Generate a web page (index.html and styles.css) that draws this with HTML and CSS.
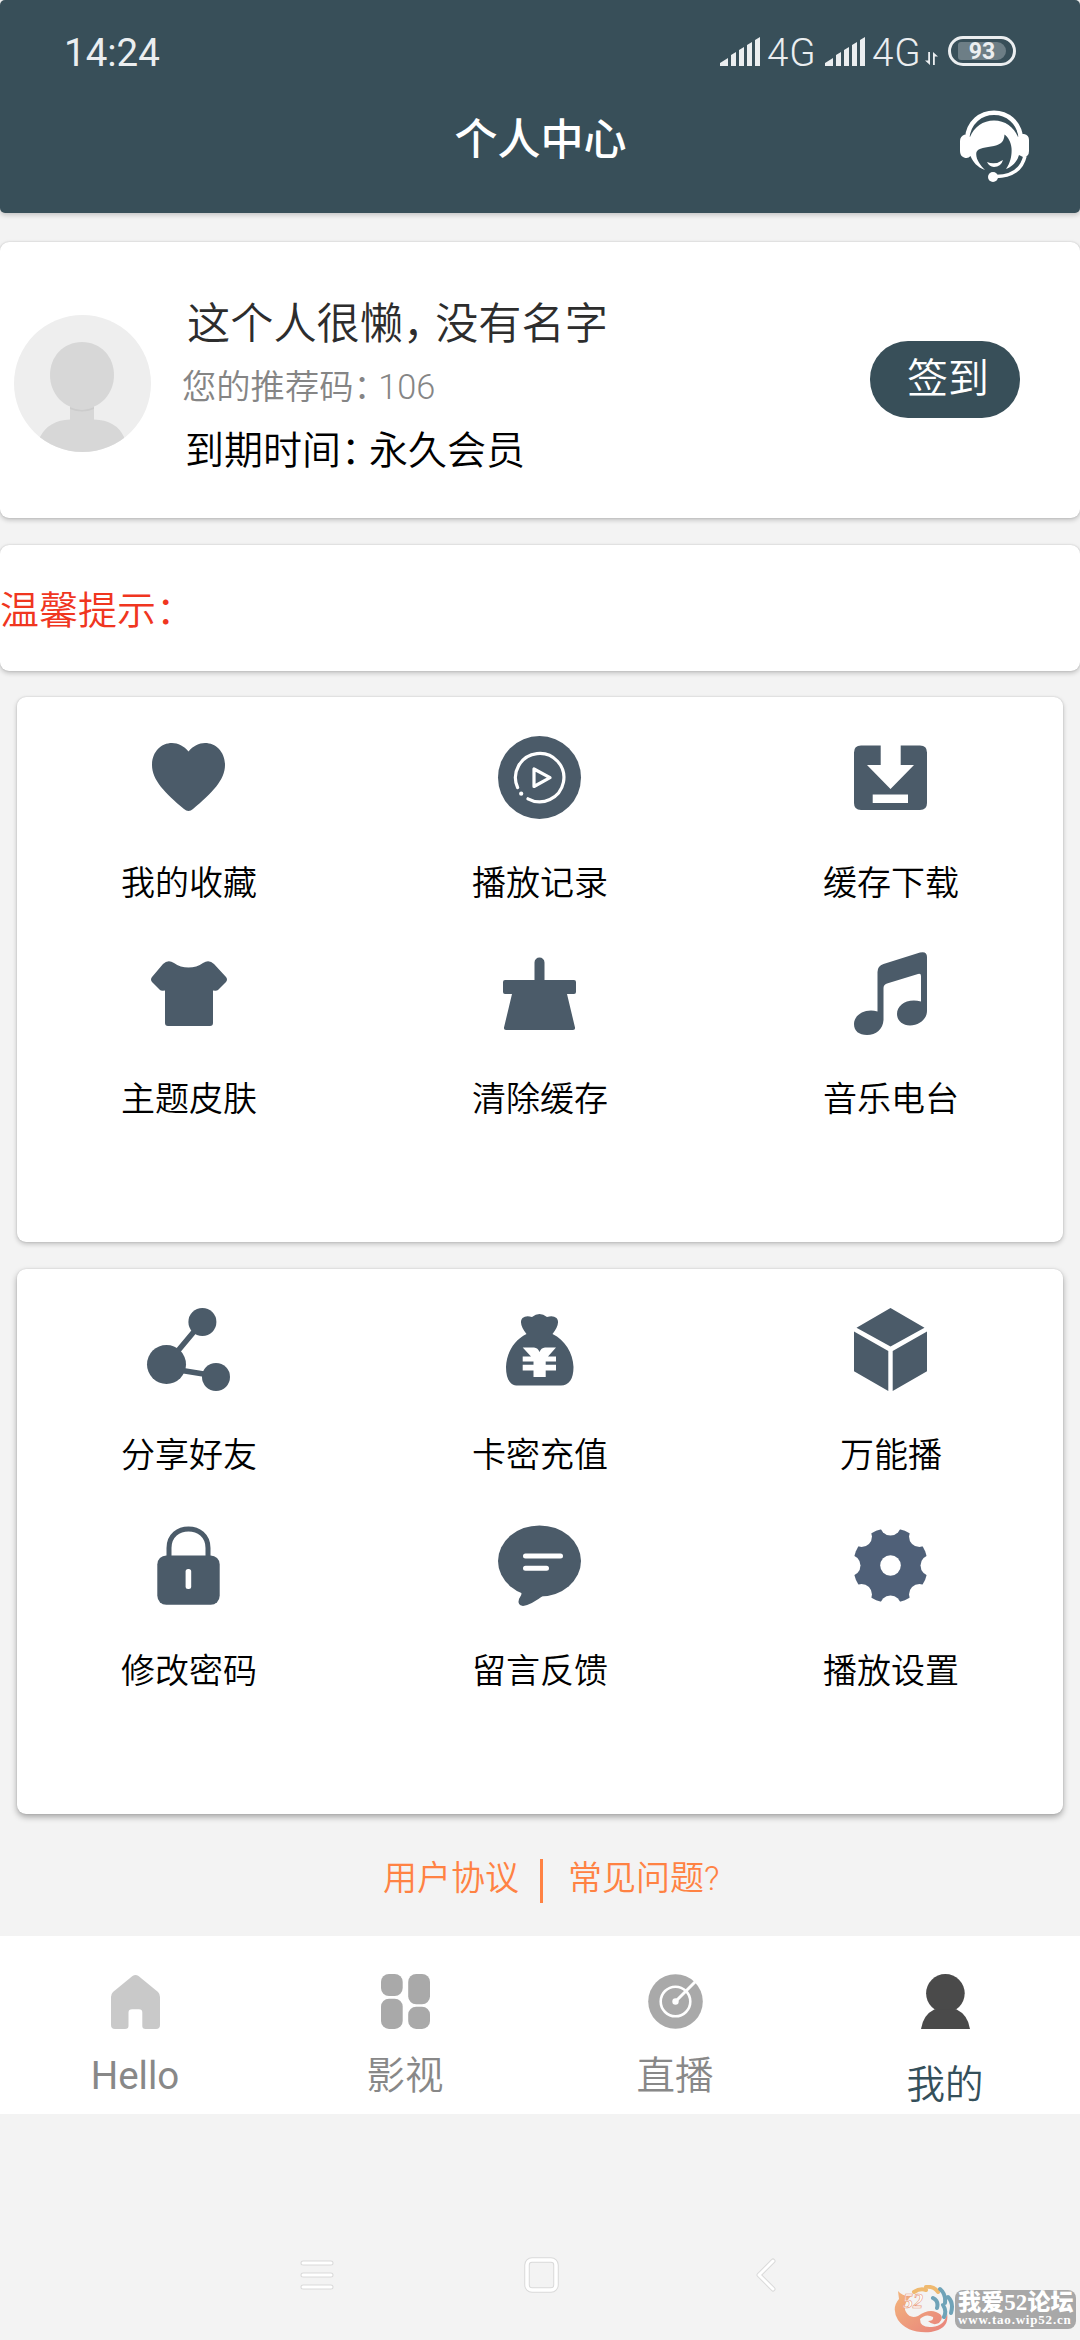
FILE: index.html
```html
<!DOCTYPE html>
<html lang="zh-CN">
<head>
<meta charset="utf-8">
<title>个人中心</title>
<link rel="stylesheet" href="styles.css">
</head>
<body>
<header class="header">
  <div class="status">
    <span class="clock">14:24</span>
    <div class="status-icons">
      <svg class="signal" viewBox="0 0 40 29"><path d="M0 29V26L8 21V29ZM11 29V18L16 15V29ZM19 29V13L24 10V29ZM27 29V8L32 5V29ZM35 29V3L40 0V29Z"/></svg>
      <span class="network">4G</span>
      <svg class="signal" viewBox="0 0 40 29"><path d="M0 29V26L8 21V29ZM11 29V18L16 15V29ZM19 29V13L24 10V29ZM27 29V8L32 5V29ZM35 29V3L40 0V29Z"/></svg>
      <span class="network">4G</span>
      <svg class="traffic" viewBox="0 0 13 13"><path d="M3.200 0H5V13L0 8.500H3.200ZM8 0L13 4.500H9.800V13H8Z"/></svg>
      <span class="battery"><span class="battery-fill">93</span></span>
    </div>
  </div>
  <div class="titlebar">
    <h1 class="title">个人中心</h1>
    <svg class="service" viewBox="0 0 70 73">
      <path d="M7 29C10 -6 58 -6 61 29" fill="none" stroke="#fff" stroke-width="4.600"/>
      <path d="M10 27C14 17 23 10.500 34 10.500C45 10.500 54 17 58 27L62 24H64Q69 25 69 30V41Q69 47 63 47L59 45C57 52 52 57 46 59C51 52 52 44 51.500 38C51 32 48 27 44.500 24.500C44 31 42 34 34 36C26 37.500 18 38 16.500 42C15 48 20 55 25 60C17 57 13 52 10.500 46Q8 49 4 47.500Q0 46 0 41V31Q0 26 5 24.500Z"/>
      <path d="M27 52Q35 55.500 43 50Q41 57 34 57Q29 56.500 27 52Z"/>
      <path d="M65 46C62 59 52 66.500 36 66.500" fill="none" stroke="#fff" stroke-width="3.500"/>
      <circle cx="33" cy="67" r="5"/>
    </svg>
  </div>
</header>

<section class="card profile">
  <svg class="avatar" viewBox="0 0 137 137">
    <defs><clipPath id="round"><circle cx="68.500" cy="68.500" r="68.500"/></clipPath></defs>
    <g clip-path="url(#round)">
      <rect width="137" height="137" fill="#eee"/>
      <path fill="#d7d7d7" d="M56 90H80V104.500Q102 105 110 122V137H26V122Q35 105 56 104.500Z"/>
      <path fill="#ccc" d="M56 92Q68 98 80 92V94Q68 99 56 94Z"/>
      <path fill="#d7d7d7" d="M68 27C87 27 100 42 100 60C100 79 86 94 68 94C50 94 36 79 36 60C36 42 49 27 68 27Z"/>
    </g>
  </svg>
  <div class="info">
    <p class="name">这个人很懒<span class="comma">，</span>没有名字</p>
    <p class="code">您的推荐码<span class="colon">：</span>106</p>
    <p class="expiry">到期时间<span class="colon">：</span>永久会员</p>
  </div>
  <button class="checkin">签到</button>
</section>

<section class="card notice">温馨提示<span class="colon">：</span></section>

<section class="card menu">
  <div class="item">
    <svg class="icon" viewBox="0 0 84 84"><path d="M41.500 15.500C37 10 31 7 25 7C14 7 5 16 5 29C5 44 18 57 37 73Q41.500 77 46 73C65 57 78 44 78 29C78 16 69 7 58 7C52 7 46 10 41.500 15.500Z"/></svg>
    <span class="label">我的收藏</span>
  </div>
  <div class="item">
    <svg class="icon" viewBox="0 0 84 84"><circle cx="41.500" cy="41.500" r="41.500"/><g fill="none" stroke="#fff" stroke-width="3.200" stroke-linecap="round" stroke-linejoin="round"><path d="M19.600 51.500A24.200 24.200 0 1 1 30 62.800M36 33V50.500L52 41.700Z"/></g><circle cx="23.200" cy="57.700" r="2.100" fill="#fff"/></svg>
    <span class="label">播放记录</span>
  </div>
  <div class="item">
    <svg class="icon" viewBox="0 0 84 84"><path fill-rule="evenodd" d="M12 9.500H31.700V29H18L41.500 53L65 29H51.700V9.500H71Q78 9.500 78 16.500V67Q78 74 71 74H12Q5 74 5 67V16.500Q5 9.500 12 9.500ZM23.700 58.500H59V67H23.700Z"/></svg>
    <span class="label">缓存下载</span>
  </div>
  <div class="item">
    <svg class="icon" viewBox="0 0 84 84"><path d="M16 12Q21 7 27 11C35 17 48 17 56 11Q62 7 67 12L79 25Q81 27.500 79 30L71 38Q70 39 66 38.500V71Q66 74 63 74H21Q18 74 18 71V38.500Q14 39 13 38L5 30Q3 27.500 5 25Z"/></svg>
    <span class="label">主题皮肤</span>
  </div>
  <div class="item">
    <svg class="icon" viewBox="0 0 84 84"><path d="M36.500 28V10.500A5 5 0 0 1 46.500 10.500V28H76Q78 28 78 30V40Q78 42 76 42H69L77 75.500Q77.500 78 75 78H8Q5.500 78 6 75.500L14 42H7Q5 42 5 40V30Q5 28 7 28Z"/></svg>
    <span class="label">清除缓存</span>
  </div>
  <div class="item">
    <svg class="icon" viewBox="0 0 84 84"><path d="M28.500 20Q28.500 14 34.500 12L71 .6Q78 -1 78 5V59C78 67 70 73.500 61 73.500C53 73.500 48 68 48 62C48 53 58 46 72 49.500V24Q72 21 69 22L38 31.500Q34.500 32.500 34.500 36V68C34 77 27 83 18 83C10 83 5 79 5 72C5 63 16 56 28.500 59.500Z"/></svg>
    <span class="label">音乐电台</span>
  </div>
</section>

<section class="card menu menu-last">
  <div class="item">
    <svg class="icon" viewBox="0 0 84 84"><path d="M55.400 13.600L19.500 56.400M19.500 60L69 68" stroke="#4b5b69" stroke-width="5.500"/><circle cx="55.400" cy="14" r="14"/><circle cx="19.500" cy="56.400" r="19.500"/><circle cx="69" cy="69" r="14"/></svg>
    <span class="label">分享好友</span>
  </div>
  <div class="item">
    <svg class="icon" viewBox="0 0 84 84"><path d="M28.500 26C24 20 21 14 24.500 10Q28 7 34 9Q41.500 3 49 9Q55 7 58.500 10C62 14 59 20 54.500 26C67 32 75 45 75.500 59C75.500 71 71 77.500 63 77.500H20C12 77.500 8 71 8 59C8.500 45 16 32 28.500 26Z"/><path fill="#fff" d="M24.700 39.600H36Q40 40 41.500 44Q43 40 47 39.600H58L50 48.400H58V53.400H47.700V56.800H58V62.500H47.700V69H35.500V62.500H24.700V56.800H35.500V53.400H24.700V48.400H33Z"/></svg>
    <span class="label">卡密充值</span>
  </div>
  <div class="item">
    <svg class="icon" viewBox="0 0 84 84"><path d="M41.500 0L75.500 19.700L41.500 38.400L7.500 19.700ZM5 23.500L39.300 43V83L5 63.300ZM78 23.500L43.700 43V83L78 63.300Z"/></svg>
    <span class="label">万能播</span>
  </div>
  <div class="item">
    <svg class="icon" viewBox="0 0 84 84"><path d="M22 35V24C22 -1.500 61 -1.500 61 24V35" fill="none" stroke="#4b5b69" stroke-width="5"/><rect x="10.300" y="31.400" width="62.400" height="49.400" rx="9"/><rect x="38.600" y="45" width="5.600" height="20" rx="2.500" fill="#fff"/></svg>
    <span class="label">修改密码</span>
  </div>
  <div class="item">
    <svg class="icon" viewBox="0 0 84 84"><ellipse cx="41.500" cy="37" rx="41.500" ry="35.600"/><path d="M24 66Q24 71 21 75Q19 81 25 82Q33 81 46 71Z"/><path d="M27.500 32H62.500M27.500 44.200H48.500" stroke="#fff" stroke-width="5" stroke-linecap="round"/></svg>
    <span class="label">留言反馈</span>
  </div>
  <div class="item">
    <svg class="icon" viewBox="0 0 84 84"><circle cx="41.500" cy="41.500" r="37.500" fill="#4f6078"/><g fill="#fff"><circle cx="41.500" cy="41.500" r="10.300"/><circle cx="41.500" cy="1" r="10.500"/><circle cx="41.500" cy="82" r="10.500"/><circle cx="1" cy="41.500" r="10.500"/><circle cx="82" cy="41.500" r="10.500"/><circle cx="12.500" cy="12.500" r="10.500"/><circle cx="70.500" cy="12.500" r="10.500"/><circle cx="12.500" cy="70.500" r="10.500"/><circle cx="70.500" cy="70.500" r="10.500"/></g></svg>
    <span class="label">播放设置</span>
  </div>
</section>

<div class="links">
  <a class="link">用户协议</a>
  <span class="divider"></span>
  <a class="link">常见问题?</a>
</div>

<nav class="tabs">
  <div class="tab">
    <svg class="tab-icon" viewBox="0 0 56 56"><path fill="#c9c9c9" d="M25.500 2Q28.500 0 31.500 2L51 18Q53 20 53 23V51Q53 55 49 55H38.500Q35.300 55 35.300 52V38.500Q35.300 35.300 32 35.300H25Q21.500 35.300 21.500 38.500V52Q21.500 55 18 55H8Q4 55 4 51V23Q4 20 6 18Z"/></svg>
    <span>Hello</span>
  </div>
  <div class="tab">
    <svg class="tab-icon" viewBox="0 0 56 56" fill="#a9a9a9"><rect x="4" width="21.700" height="22" rx="8"/><rect x="4" y="24.700" width="21.700" height="30.200" rx="8"/><rect x="31.200" width="21.800" height="30.300" rx="8"/><rect x="31.200" y="32.700" width="21.800" height="22.200" rx="8"/></svg>
    <span>影视</span>
  </div>
  <div class="tab">
    <svg class="tab-icon" viewBox="0 0 56 56"><circle cx="28.500" cy="27.500" r="27.300" fill="#a9a9a9"/><circle cx="28.500" cy="27.500" r="14.800" fill="none" stroke="#fff" stroke-width="2.600"/><path d="M28.500 27.500L49 7" stroke="#fff" stroke-width="3"/><circle cx="28.500" cy="27.500" r="3.200" fill="#fff"/></svg>
    <span>直播</span>
  </div>
  <div class="tab tab-active">
    <svg class="tab-icon" viewBox="0 0 56 56" fill="#4a4a4a"><circle cx="28.400" cy="19.300" r="19.300"/><path d="M17.600 35.300H39.300Q51 41 53 55H4Q6 41 17.600 35.300Z"/></svg>
    <span>我的</span>
  </div>
</nav>

<footer class="sysnav">
  <svg class="sys-icon" viewBox="0 0 40 40"><g fill="none" stroke-linecap="round" stroke-linejoin="round"><path d="M7 8H35M7 20H35M7 32H35" stroke="#dadada" stroke-width="5"/><path d="M7 8H35M7 20H35M7 32H35" stroke="#fff" stroke-width="3"/></g></svg>
  <svg class="sys-icon" viewBox="0 0 40 40"><g fill="none"><rect x="5" y="5" width="29" height="30" rx="5" stroke="#dadada" stroke-width="5.500"/><rect x="5" y="5" width="29" height="30" rx="5" stroke="#fff" stroke-width="3.500"/></g></svg>
  <svg class="sys-icon" viewBox="0 0 40 40"><g fill="none" stroke-linecap="round" stroke-linejoin="round"><path d="M26 6L12 20L26 34" stroke="#dadada" stroke-width="5"/><path d="M26 6L12 20L26 34" stroke="#fff" stroke-width="3"/></g></svg>
</footer>

<div class="watermark">
  <svg class="mark" viewBox="0 0 62 48">
    <defs><linearGradient id="flame" x1="0" y1="0" x2="1" y2="1"><stop offset="0" stop-color="#f3b57c"/><stop offset="1" stop-color="#e8827c"/></linearGradient></defs>
    <path fill="url(#flame)" d="M4 6Q9 12 17 11Q8 20 12 27Q16 34 24 31Q34 24 42 27Q52 31 45 38Q39 41 34 36Q40 36 39 32Q32 28 26 34Q26 43 38 42Q51 41 53 28Q56 44 37 47Q14 49 4 35Q-3 23 5 14Z"/>
    <g fill="none" stroke-linecap="round" stroke-width="4"><path d="M20 7Q26 3 32 5M32 2Q40 1 44 7" stroke="#efb96f"/><path d="M46 4Q52 9 51 18M54 12Q60 18 57 28M49 20Q53 26 50 32M39 13Q45 16 43 23" stroke="#6fa3b8"/></g>
    <text class="mark-text" x="9" y="23">52</text>
  </svg>
  <div class="plate"><span class="plate-name">我爱52论坛</span><span class="plate-url">www.tao.wip52.cn</span></div>
</div>
</body>
</html>
```
FILE: styles.css
```css
* { box-sizing: border-box; }

body {
  position: relative;
  display: flex;
  flex-direction: column;
  width: 1080px;
  height: 2340px;
  margin: 0;
  overflow: hidden;
  background: #f3f3f3;
  color: #000;
  font-family: Roboto, "Noto Sans CJK SC", sans-serif;
  font-weight: 350;
}

h1, p { margin: 0; }
svg { display: block; flex: none; }

.header {
  height: 213px;
  border-radius: 5px;
  background: #384f59;
  box-shadow: 0 2px 5px rgba(0, 0, 0, .2);
  color: #fff;
}

.status {
  display: flex;
  justify-content: space-between;
  align-items: center;
  height: 102px;
  padding: 0 64px 0 64px;
  color: #ebeef0;
}

.clock { padding-top: 4px; font-size: 38.5px; font-weight: 400; line-height: 44px; }
.status-icons { display: flex; align-items: center; }
.signal { width: 40px; height: 29px; fill: #ebeef0; }
.network { width: 49px; margin: 4px 8px 0 7px; font-size: 38.5px; line-height: 40px; letter-spacing: 1px; white-space: nowrap; }
.signal + .network + .signal { margin-left: 1px; }
.traffic { width: 13px; height: 13px; margin: 14px 10px 0 -4px; fill: #ebeef0; }
.battery { width: 68px; height: 30px; padding: 3px 7px; border: 3px solid #ebeef0; border-radius: 15px; }
.battery-fill {
  display: block;
  height: 18px;
  border-radius: 3px 9px 9px 3px;
  background: #6d7e86;
  font-size: 23px;
  font-weight: 700;
  line-height: 19px;
  text-align: center;
}

.titlebar {
  display: grid;
  grid-template-columns: 1fr auto 1fr;
  align-items: start;
  padding: 8px 50px 0;
}
.title { grid-column: 2; padding: 5px 0 0 1px; font-size: 43px; font-weight: 500; line-height: 50px; }
.service { justify-self: end; width: 70px; height: 73px; fill: #fff; }

.card {
  border-radius: 9px;
  background: #fff;
  box-shadow: 0 2px 5px rgba(0, 0, 0, .22), 0 0 2px rgba(0, 0, 0, .14);
}

.profile {
  display: flex;
  align-items: flex-start;
  height: 276px;
  margin-top: 29px;
  padding: 53px 60px 0 14px;
}
.avatar { width: 137px; height: 137px; margin-top: 20px; }
.info { flex: 1; padding: 2px 0 0 31px; white-space: nowrap; }
.name { padding-left: 5px; color: #2d2d2d; font-size: 43.2px; line-height: 56px; }
.comma { letter-spacing: -11px; }
.code { margin-top: 12px; color: #858585; font-size: 34.3px; line-height: 44px; }
.colon { letter-spacing: -.28em; }
.expiry { margin-top: 17px; padding-left: 3px; font-size: 39px; line-height: 50px; }
.checkin {
  width: 150px;
  height: 77px;
  margin-top: 46px;
  padding: 0 0 2px 6px;
  border: 0;
  border-radius: 38px;
  background: #384f59;
  color: #fff;
  font: inherit;
  font-size: 41px;
  line-height: 50px;
}

.notice { height: 126px; margin-top: 27px; padding: 41px 0 0; color: #f0361f; font-size: 39px; line-height: 50px; }

.menu {
  display: grid;
  grid-template-columns: repeat(3, 351px);
  grid-auto-rows: 216px;
  justify-content: center;
  height: 545px;
  margin: 26px 17px 0;
  padding-top: 39px;
}
.menu-last { margin-top: 27px; box-shadow: 0 3px 6px rgba(0, 0, 0, .32), 0 0 2px rgba(0, 0, 0, .12); }
.item { display: flex; flex-direction: column; align-items: center; }
.icon { width: 84px; height: 84px; fill: #4b5b69; overflow: visible; }
.label { margin-top: 41px; font-size: 34px; line-height: 44px; }

.links {
  display: flex;
  height: 122px;
  padding: 45px 0 0 383px;
  color: #ff8243;
  font-size: 34px;
  line-height: 40px;
}
.link { margin-top: -1px; }
.divider {
  width: 3px;
  height: 44px;
  margin: 0 25px 0 21px;
  background: #ff8243;
}

.tabs { display: flex; height: 178px; background: #fff; }
.tab {
  display: flex;
  flex: 1;
  flex-direction: column;
  align-items: center;
  gap: 23px;
  padding-top: 38px;
  color: #888;
  font-size: 38.5px;
  line-height: 46px;
}
.tab:first-child { font-weight: 400; }
.tab-icon { width: 56px; height: 56px; }
.tab-active { gap: 32px; color: #344f5a; }

.sysnav { display: flex; justify-content: space-between; padding: 141px 293px 0 296px; }
.sys-icon { width: 40px; height: 40px; }

/* Forum stamp laid over the bottom corner */
.watermark { position: absolute; right: 4px; bottom: 7px; display: flex; align-items: center; width: 182px; }
.mark { width: 62px; height: 48px; margin-right: -1px; }
.mark-text { fill: #fff; font: italic 700 20px "Liberation Serif", serif; stroke: #e99a7c; stroke-width: .6px; }
.plate {
  display: flex;
  flex: none;
  flex-direction: column;
  width: 121px;
  height: 39px;
  padding: 2px 2px 0 3px;
  border-radius: 8px;
  background: #a8a8a8;
  color: #fff;
  white-space: nowrap;
}
.plate-name { font: 900 23px/22px "Liberation Serif", "Noto Sans CJK SC", serif; letter-spacing: .1px; }
.plate-url { font: 700 13px/12px "Liberation Serif", serif; letter-spacing: .8px; }
```
